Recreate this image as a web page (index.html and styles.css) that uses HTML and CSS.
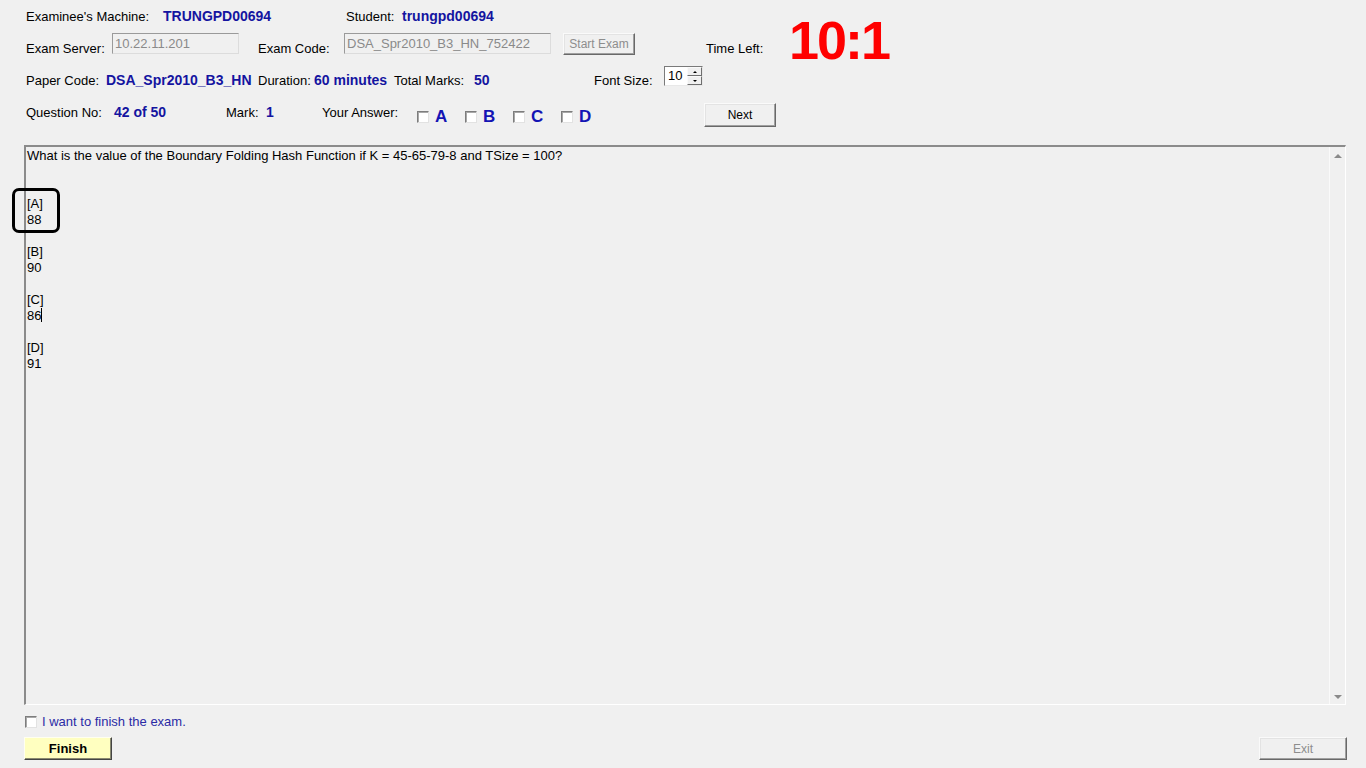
FILE: index.html
```html
<!DOCTYPE html>
<html>
<head>
<meta charset="utf-8">
<link rel="stylesheet" href="styles.css">
</head>
<body>
<div class="app">
  <header class="head">
    <div class="row r1">
      <span class="lbl w137">Examinee's Machine:</span>
      <span class="val w183">TRUNGPD00694</span>
      <span class="lbl w56">Student:</span>
      <span class="val">trungpd00694</span>
    </div>
    <div class="row r2">
      <span class="lbl w86 low">Exam Server:</span>
      <span class="tbox tb1">10.22.11.201</span>
      <span class="lbl w86 low">Exam Code:</span>
      <span class="tbox tb2">DSA_Spr2010_B3_HN_752422</span>
      <span class="btn btn-start">Start Exam</span>
      <span class="lbl w83 low tl">Time Left:</span>
      <span class="timer">10:1</span>
    </div>
    <div class="row r3">
      <span class="lbl w80">Paper Code:</span>
      <span class="val w152">DSA_Spr2010_B3_HN</span>
      <span class="lbl w56">Duration:</span>
      <span class="val w80">60 minutes</span>
      <span class="lbl w80">Total Marks:</span>
      <span class="val w120">50</span>
      <span class="lbl w70">Font Size:</span>
      <span class="spin"><span class="spin-val">10</span><span class="spin-btns"><span class="sb up"></span><span class="sb dn"></span></span></span>
    </div>
    <div class="row r4">
      <span class="lbl w88">Question No:</span>
      <span class="val w112">42 of 50</span>
      <span class="lbl w40">Mark:</span>
      <span class="val w56">1</span>
      <span class="lbl w95">Your Answer:</span>
      <span class="opt"><span class="cb"></span><span class="letter">A</span></span>
      <span class="opt"><span class="cb"></span><span class="letter">B</span></span>
      <span class="opt"><span class="cb"></span><span class="letter">C</span></span>
      <span class="opt"><span class="cb"></span><span class="letter">D</span></span>
      <span class="btn btn-next">Next</span>
    </div>
  </header>

  <main class="qbox">
    <div class="qtext">
      <p>What is the value of the Boundary Folding Hash Function if K = 45-65-79-8 and TSize = 100?</p>
      <p>&nbsp;</p>
      <p>&nbsp;</p>
      <p>[A]</p>
      <p>88</p>
      <p>&nbsp;</p>
      <p>[B]</p>
      <p>90</p>
      <p>&nbsp;</p>
      <p>[C]</p>
      <p>86<span class="caret"></span></p>
      <p>&nbsp;</p>
      <p>[D]</p>
      <p>91</p>
    </div>
    <div class="vscroll">
      <span class="arr arr-up"></span>
      <span class="arr arr-dn"></span>
    </div>
    <div class="mark"></div>
  </main>

  <div class="finish-check">
    <span class="cb"></span>
    <span class="finish-lbl">I want to finish the exam.</span>
  </div>
  <div class="bottom">
    <span class="btn btn-finish">Finish</span>
    <span class="btn btn-exit">Exit</span>
  </div>
</div>
</body>
</html>
```

FILE: styles.css
```css
html, body {
  margin: 0;
  padding: 0;
  background: #f0f0f0;
}
body {
  font-family: "Liberation Sans", Arial, sans-serif;
  font-size: 13px;
  color: #000;
  width: 1366px;
  height: 768px;
  overflow: hidden;
}
.app {
  display: flex;
  flex-direction: column;
}
.head {
  padding-left: 26px;
  display: flex;
  flex-direction: column;
}
.row {
  display: flex;
  align-items: center;
  height: 32px;
  white-space: nowrap;
}
.lbl {
  flex: none;
  line-height: 15px;
}
.val {
  flex: none;
  font-weight: bold;
  font-size: 14px;
  color: #1414a0;
  line-height: 15px;
}
.w40 { width: 40px; }
.w56 { width: 56px; }
.w70 { width: 70px; }
.w80 { width: 80px; }
.w83 { width: 83px; }
.w86 { width: 86px; }
.w88 { width: 88px; }
.w95 { width: 95px; }
.w112 { width: 112px; }
.w120 { width: 120px; }
.w137 { width: 137px; }
.w152 { width: 152px; }
.w183 { width: 183px; }

.r2 {
  align-items: flex-start;
}
.r2 .low {
  margin-top: 9px;
}
.tbox {
  flex: none;
  box-sizing: border-box;
  height: 21px;
  margin-top: 1px;
  border: 1px solid;
  border-color: #9a9a9a #dcdcdc #dcdcdc #9a9a9a;
  color: #8a8a8a;
  padding: 2px 2px 0 2px;
  line-height: 15px;
  background: #f0f0f0;
}
.tb1 { width: 127px; margin-right: 19px; }
.tb2 { width: 207px; margin-right: 12px; }

.btn {
  flex: none;
  box-sizing: border-box;
  display: flex;
  align-items: center;
  justify-content: center;
  background: #f0f0f0;
  border: 1px solid;
  border-color: #fafafa #696969 #696969 #fafafa;
  box-shadow: inset -1px -1px 0 #a0a0a0, inset 1px 1px 0 #e3e3e3;
  font-size: 12px;
}
.btn-start {
  width: 72px;
  height: 22px;
  margin-top: 1px;
  margin-right: 71px;
  color: #8d8d8d;
}
.tl {
  margin-top: 9px;
}
.timer {
  flex: none;
  margin-top: -21px;
  font-weight: bold;
  font-size: 54px;
  line-height: 58px;
  color: #ff0000;
  letter-spacing: -2px;
}

.spin {
  flex: none;
  box-sizing: border-box;
  display: flex;
  align-items: stretch;
  width: 39px;
  height: 20px;
  margin-top: -8px;
  background: #fff;
  border: 1px solid;
  border-color: #7a7a7a #e8e8e8 #e8e8e8 #7a7a7a;
}
.spin-val {
  flex: 1;
  font-size: 13px;
  line-height: 18px;
  padding-left: 3px;
}
.spin-btns {
  flex: none;
  width: 15px;
  display: flex;
  flex-direction: column;
}
.sb {
  flex: 1;
  box-sizing: border-box;
  background: #f0f0f0;
  border: 1px solid;
  border-color: #fafafa #6e6e6e #6e6e6e #fafafa;
  position: relative;
}
.sb::after {
  content: "";
  position: absolute;
  left: 5px;
  top: 3px;
  border-left: 2px solid transparent;
  border-right: 2px solid transparent;
}
.sb.up::after { border-bottom: 2px solid #000; }
.sb.dn::after { border-top: 2px solid #000; top: 3px; }

.opt {
  flex: none;
  display: flex;
  align-items: center;
  width: 48px;
  margin-top: 9px;
}
.cb {
  flex: none;
  box-sizing: border-box;
  width: 12px;
  height: 12px;
  background: #fff;
  border: 1px solid;
  border-color: #7d7d7d #e2e2e2 #e2e2e2 #7d7d7d;
  box-shadow: inset 1px 1px 0 #a8a8a8;
}
.letter {
  margin-left: 6px;
  font-weight: bold;
  font-size: 17px;
  color: #1414b4;
  line-height: 18px;
}
.btn-next {
  width: 72px;
  height: 24px;
  margin-left: 95px;
  margin-top: 6px;
  font-size: 12px;
  color: #000;
}

.qbox {
  position: relative;
  box-sizing: border-box;
  margin: 17px 20px 0 24px;
  width: 1322px;
  height: 560px;
  border-top: 2px solid #8b8b8b;
  border-left: 2px solid #8b8b8b;
  border-right: 1px solid #fff;
  border-bottom: 1px solid #fff;
  display: flex;
}
.qtext {
  flex: 1;
  padding: 1px 0 0 1px;
  font-size: 13px;
  line-height: 16px;
}
.qtext p {
  margin: 0;
}
.caret {
  display: inline-block;
  width: 1px;
  height: 14px;
  background: #000;
  vertical-align: -2px;
}
.vscroll {
  flex: none;
  width: 15px;
  border-left: 1px solid #fafafa;
  background: #f0f0f0;
  display: flex;
  flex-direction: column;
  justify-content: space-between;
  align-items: center;
  padding: 7px 0 5px;
}
.arr {
  width: 0;
  height: 0;
  border-left: 4px solid transparent;
  border-right: 4px solid transparent;
}
.arr-up { border-bottom: 4px solid #8a8a8a; }
.arr-dn { border-top: 4px solid #8a8a8a; }

.mark {
  position: absolute;
  left: -14px;
  top: 41px;
  width: 42px;
  height: 39px;
  border: 3px solid #000;
  border-radius: 7px;
}

.finish-check {
  display: flex;
  align-items: center;
  margin: 10px 0 0 25px;
  height: 14px;
}
.finish-lbl {
  margin-left: 5px;
  color: #2b2ba5;
  font-size: 13px;
  line-height: 14px;
}
.bottom {
  display: flex;
  justify-content: space-between;
  margin: 8px 19px 0 24px;
}
.btn-finish {
  width: 88px;
  height: 23px;
  background: #ffffc0;
  border-color: #fffff0 #444 #444 #fffff0;
  box-shadow: inset -1px -1px 0 #8a8a70;
  font-weight: bold;
  font-size: 13px;
}
.btn-exit {
  width: 88px;
  height: 23px;
  color: #8d8d8d;
}
```
